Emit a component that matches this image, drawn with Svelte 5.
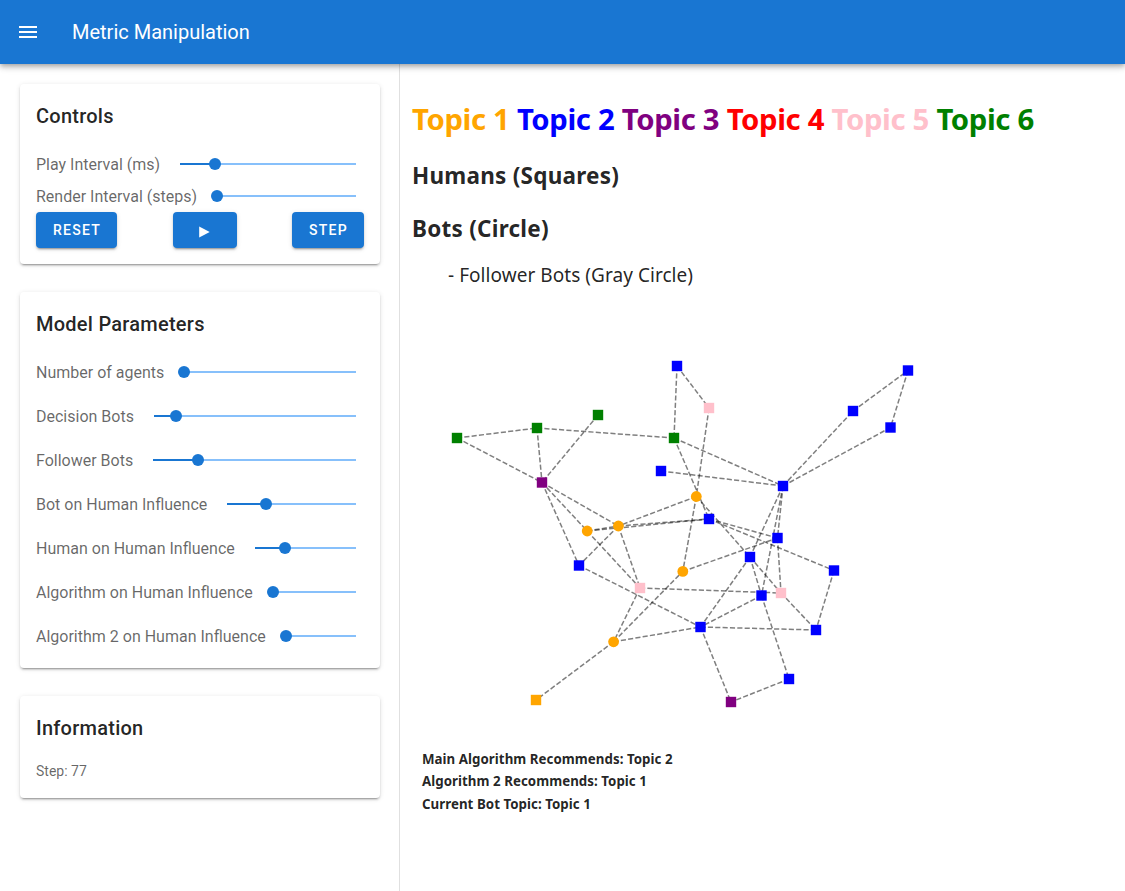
<script>
  const controls = [
    { label: 'Play Interval (ms)', value: 20 },
    { label: 'Render Interval (steps)', value: 0 }
  ];
  const params = [
    { label: 'Number of agents', value: 0 },
    { label: 'Decision Bots', value: 11 },
    { label: 'Follower Bots', value: 22.2 },
    { label: 'Bot on Human Influence', value: 30 },
    { label: 'Human on Human Influence', value: 30 },
    { label: 'Algorithm on Human Influence', value: 0 },
    { label: 'Algorithm 2 on Human Influence', value: 0 }
  ];
  const topics = ['orange', 'blue', 'purple', 'red', 'pink', 'green'];

  // id: [x, y, colour, isBot]
  const nodes = {
    a: [457, 438, 'green'], b: [537, 428, 'green'], c: [598, 415, 'green'],
    d: [542, 482.5, 'purple'], e: [677, 366, 'blue'], f: [709, 408, 'pink'],
    g: [674, 438, 'green'], h: [661, 471, 'blue'], i: [783, 486, 'blue'],
    j: [853, 411, 'blue'], k: [908, 370.5, 'blue'], l: [890.5, 427.5, 'blue'],
    m: [696.3, 496.5, 'orange', true], n: [709, 519, 'blue'],
    o: [587.2, 531, 'orange', true], p: [618.4, 526, 'orange', true],
    q: [579, 565.5, 'blue'], r: [682.8, 571.4, 'orange', true],
    s: [640, 588, 'pink'], t: [613.6, 641.8, 'orange', true],
    u: [536, 700, 'orange'], v: [700.5, 627, 'blue'], w: [777.5, 538, 'blue'],
    x: [750, 557, 'blue'], y: [834, 570.5, 'blue'], z: [781, 593, 'pink'],
    A: [761.5, 595.5, 'blue'], B: [816, 630, 'blue'], C: [789, 679, 'blue'],
    D: [731, 702, 'purple']
  };
  const edges = 'ab ad bd cd bg eg ef fm gi gn hi ij jk kl il do dp dq mp mr mx op on pn pq ps os qv sz st tr tv tu rw nw ny ix iA iw wz xA xv xz zB Av vB AC CD vD yB'
    .split(' ')
    .map((pair) => [nodes[pair[0]], nodes[pair[1]]]);
</script>

{#snippet slider(item)}
  <div class="slider">
    <span class="label">{item.label}</span>
    <div class="track">
      <div class="fill" style="width: {item.value}%"></div>
      <div class="thumb" style="left: {item.value}%"></div>
    </div>
  </div>
{/snippet}

<div class="app">
  <header>
    <svg class="menu" viewBox="0 0 24 24"><path d="M3 6h18v2H3V6m0 5h18v2H3v-2m0 5h18v2H3v-2z" /></svg>
    <span class="title">Metric Manipulation</span>
  </header>
  <div class="body">
    <aside>
      <section class="card controls">
        <h4>Controls</h4>
        {#each controls as item}{@render slider(item)}{/each}
        <div class="buttons">
          <button class="reset">Reset</button>
          <button class="play" aria-label="Play"><svg viewBox="0 0 12 12"><path d="M0.2 0.5v11L10.7 6z" /></svg></button>
          <button class="step">Step</button>
        </div>
      </section>
      <section class="card params">
        <h4>Model Parameters</h4>
        <div class="list">
          {#each params as item}{@render slider(item)}{/each}
        </div>
      </section>
      <section class="card info">
        <h4>Information</h4>
        <p>Step: 77</p>
      </section>
    </aside>
    <main>
      <h1>{#each topics as color, n}<span style="color: {color}">Topic {n + 1}</span>{' '}{/each}</h1>
      <h2>Humans (Squares)</h2>
      <h2 class="second">Bots (Circle)</h2>
      <p class="follower">- Follower Bots (Gray Circle)</p>
      <svg class="graph" viewBox="412 340 520 390">
        <g class="edges">
          {#each edges as [s, t]}<line x1={s[0]} y1={s[1]} x2={t[0]} y2={t[1]} />{/each}
        </g>
        {#each Object.values(nodes) as [x, y, color, bot]}
          {#if bot}
            <circle cx={x} cy={y} r="5.4" fill={color} />
          {:else}
            <rect x={x - 5.2} y={y - 5.2} width="10.4" height="10.4" fill={color} />
          {/if}
        {/each}
      </svg>
      <div class="results">
        <p>Main Algorithm Recommends: Topic 2</p>
        <p>Algorithm 2 Recommends: Topic 1</p>
        <p>Current Bot Topic: Topic 1</p>
      </div>
    </main>
  </div>
</div>

<style>
  :global(body) { margin: 0; overflow: hidden; background: #fff; }
  .app { height: 891px; display: flex; flex-direction: column; font-family: Roboto, sans-serif; color: rgba(0, 0, 0, 0.87); }
  header {
    height: 64px; flex: none; display: flex; align-items: center; box-sizing: border-box;
    padding-left: 16px; gap: 32px; background: #1976d2; color: #fff; position: relative; z-index: 1;
    box-shadow: 0 2px 4px -1px rgba(0,0,0,.2), 0 4px 5px rgba(0,0,0,.14), 0 1px 10px rgba(0,0,0,.12);
  }
  .menu { width: 24px; height: 24px; fill: #fff; }
  .title { font-size: 20px; line-height: 30px; }
  .body { flex: 1; display: flex; min-height: 0; }
  aside {
    width: 400px; flex: none; box-sizing: border-box; border-right: 1px solid #e0e0e0;
    padding: 20px 19px 0 20px; display: flex; flex-direction: column; gap: 28px;
  }
  .card {
    box-sizing: border-box; padding: 16px; border-radius: 4px; background: #fff;
    box-shadow: 0 3px 1px -2px rgba(0,0,0,.2), 0 2px 2px rgba(0,0,0,.14), 0 1px 5px rgba(0,0,0,.12);
  }
  .controls { height: 180px; }
  .params { height: 376px; }
  .info { height: 102px; }
  h4 { margin: 0 0 16px; font-size: 20px; line-height: 32px; font-weight: 500; letter-spacing: 0.25px; }
  .slider { height: 32px; display: flex; align-items: center; padding-right: 8px; gap: 20px; }
  .list { display: flex; flex-direction: column; gap: 12px; }
  .label { font-size: 16px; line-height: 20px; padding-top: 2px; color: rgba(0, 0, 0, 0.6); white-space: nowrap; }
  .track { flex: 1; height: 2px; background: #87c0fb; position: relative; }
  .fill { height: 2px; background: #1976d2; }
  .thumb { position: absolute; top: -5px; width: 12px; height: 12px; margin-left: -6px; border-radius: 50%; background: #1976d2; }
  .buttons { display: flex; justify-content: space-between; }
  button {
    height: 36px; border: 0; padding: 0 0 0 1px; border-radius: 4px; background: #1976d2; color: #fff;
    font: 500 14px Roboto, sans-serif; letter-spacing: 1.25px; text-transform: uppercase;
    display: flex; align-items: center; justify-content: center;
    box-shadow: 0 3px 1px -2px rgba(0,0,0,.2), 0 2px 2px rgba(0,0,0,.14), 0 1px 5px rgba(0,0,0,.12);
  }
  .reset { width: 81px; }
  .play { width: 64px; padding: 0; }
  .step { width: 72px; }
  button svg { width: 12px; height: 12px; fill: #fff; margin-top: 3px; }
  .info p { margin: 0; font-size: 14px; line-height: 22px; color: rgba(0, 0, 0, 0.6); }
  main { flex: 1; padding: 31px 0 0 12px; font-family: "Noto Sans", sans-serif; }
  main h1 { margin: 0; font-size: 29.3px; line-height: 48px; letter-spacing: -0.38px; word-spacing: 0.18px; white-space: nowrap; }
  main h2 { margin: 15px 0 0; font-size: 22.5px; line-height: 36px; letter-spacing: 0.24px; }
  main h2.second { margin-top: 17px; }
  .follower { margin: 13px 0 0 36px; font-size: 19px; line-height: 30px; letter-spacing: 0.05px; }
  .graph { display: block; width: 520px; height: 390px; margin-top: 50px; }
  .edges { stroke: rgba(0, 0, 0, 0.5); stroke-width: 1.5; stroke-dasharray: 5.14 2.22; }
  .results { margin: 18px 0 0 10px; }
  .results p { margin: 0; font-size: 13.3px; font-weight: 700; line-height: 22.4px; letter-spacing: 0.04px; }
</style>
